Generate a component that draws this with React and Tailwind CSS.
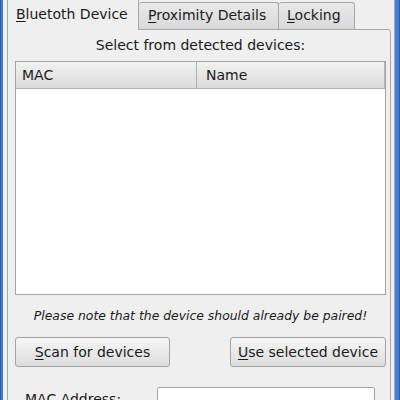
import React from "react";

const U = ({ children }) => <span className="underline underline-offset-[2px]">{children}</span>;

const Button = ({ width, children }) => (
  <button className={`${width} h-[30px] rounded-[3px] border border-[#a2a2a2] bg-gradient-to-b from-[#f7f7f7] to-[#dcdcdc] text-[14px] leading-[17px] text-[#1a1a1a]`}>
    {children}
  </button>
);

export default function App() {
  return (
    <div
      className="w-[400px] h-[400px] overflow-hidden flex bg-[#efefef] text-[#1a1a1a]"
      style={{ fontFamily: '"DejaVu Sans", sans-serif' }}
    >
      {/* window frame left */}
      <div className="w-[3px] shrink-0 bg-[#3f7cd2] border-l border-[#2a5aa2]" />

      <div className="w-[391px] shrink-0 flex flex-col pl-[4px]">
        {/* Tabs */}
        <div className="flex items-end h-[29px] relative z-10">
          <div className="w-[132px] h-[30px] -mb-px bg-[#efefef] border-x border-[#a6a6a6] pl-[8px] pt-[6px] text-[14px] leading-[17px]">
            <U>B</U>luetoth Device
          </div>
          <div className="w-[140px] h-[27px] bg-gradient-to-b from-[#e9e9e9] to-[#d9d9d9] border-t border-r border-[#a6a6a6] rounded-t-[3px] pl-[9px] pt-[4px] text-[14px] leading-[17px]">
            <U>P</U>roximity Details
          </div>
          <div className="w-[76px] h-[27px] bg-gradient-to-b from-[#e9e9e9] to-[#d9d9d9] border-t border-r border-[#a6a6a6] rounded-t-[3px] pl-[8px] pt-[4px] text-[14px] leading-[17px]">
            <U>L</U>ocking
          </div>
        </div>

        {/* Panel */}
        <div className="w-[384px] grow border border-[#a6a6a6] rounded-tr-[3px] pl-[7px] pt-[7px] flex flex-col">
          <div className="w-[371px] text-center text-[14px] leading-[17px]">Select from detected devices:</div>

          {/* List view */}
          <div className="mt-[7px] w-[371px] h-[234px] border border-[#a3a3a3] bg-white flex flex-col">
            <div className="h-[27px] shrink-0 flex border-b border-[#b4b4b4] bg-gradient-to-b from-[#f1f1f1] to-[#dcdcdc] text-[14px] leading-[17px]">
              <div className="w-[181px] flex items-center pl-[6px] pt-px border-r border-[#b0b0b0]">MAC</div>
              <div className="grow flex items-center pl-[9px] pt-px border-r border-[#b8b8b8]">Name</div>
            </div>
            <div className="grow bg-white" />
          </div>

          <div className="mt-[13px] w-[371px] text-center italic text-[12.4px] leading-[15px]">
            Please note that the device should already be paired!
          </div>

          <div className="mt-[14px] w-[371px] flex justify-between">
            <Button width="w-[155px]">
              <U>S</U>can for devices
            </Button>
            <Button width="w-[156px]">
              <U>U</U>se selected device
            </Button>
          </div>

          <div className="mt-[20px] flex items-start">
            <div className="pl-[10px] pt-[4px] w-[142px] text-[14px] leading-[17px]">MAC Address:</div>
            <div className="w-[218px] h-[26px] border border-[#a3a3a3] bg-white rounded-[2px]" />
          </div>
        </div>
      </div>

      {/* window frame right */}
      <div className="w-px shrink-0 bg-[#a9a9a9]" />
      <div className="w-[5px] shrink-0 bg-[#3f7cd2] border-r border-[#2a5aa2]" />
    </div>
  );
}
